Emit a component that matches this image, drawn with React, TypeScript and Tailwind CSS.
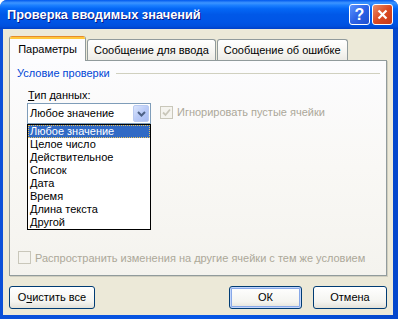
import { useState } from 'react';

const types = [
    "Любое значение",
    "Целое число",
    "Действительное",
    "Список",
    "Дата",
    "Время",
    "Длина текста",
    "Другой",
];

function Check({ checked }: { checked?: boolean }) {
    return (
        <span className="w-[13px] h-[13px] shrink-0 border border-[#C9C7BA] bg-[#F5F4EF] flex items-center justify-center">
            {checked && (
                <svg width="9" height="9" viewBox="0 0 9 9">
                    <path d="M1 4.5 L3.5 7 L8 1.5" fill="none" stroke="#C9C7BA" strokeWidth="1.8" />
                </svg>
            )}
        </span>
    );
}

function Tab({ label, active }: { label: string; active?: boolean }) {
    if (active) {
        return (
            <div className="relative z-10 -mb-px h-[25px] w-[77px] flex flex-col rounded-t-[3px] border-x border-[#919B9C] bg-[#FCFCFE] overflow-hidden">
                <div className="h-[1px] bg-[#E68B2C]" />
                <div className="h-[2px] bg-[#FFC73C]" />
                <div className="flex-1 flex items-center justify-center pb-[2px]">{label}</div>
            </div>
        );
    }
    return (
        <div className="h-[21px] px-[6px] flex items-center rounded-t-[3px] border border-b-0 border-[#919B9C] bg-[linear-gradient(to_bottom,#FFFFFF,#F6F5F1_60%,#ECEBE6)] whitespace-nowrap">
            {label}
        </div>
    );
}

export default function App() {
    const [selected] = useState(0);

    return (
        <div className="w-[398px] h-[319px] flex flex-col rounded-t-[7px] overflow-hidden bg-[linear-gradient(to_right,#0A4FD8,#0657E6_50%,#0447CC)] font-['Liberation_Sans',Arial,sans-serif] text-[11px] text-black">
            <div className="h-[29px] shrink-0 flex items-center pl-[7px] pr-[5px] bg-[linear-gradient(to_bottom,#0058EE,#3D95FF_10%,#1C80FF_18%,#0467F6_30%,#0058E8_50%,#0055E6_75%,#0050DE_90%,#0040C8)]">
                <span className="text-white font-bold text-[12.8px] [text-shadow:1px_1px_0_#0A1883]">
                    Проверка вводимых значений
                </span>
                <div className="ml-auto flex gap-[2px]">
                    <div className="w-[21px] h-[21px] rounded-[3px] border border-white bg-[linear-gradient(135deg,#5B93FF,#2D63E6_50%,#1E4FD0)] flex items-center justify-center text-white font-bold text-[16px] leading-none">
                        ?
                    </div>
                    <div className="w-[21px] h-[21px] rounded-[3px] border border-white bg-[linear-gradient(135deg,#E98E6A,#DB4A22_50%,#C7391A)] flex items-center justify-center">
                        <svg width="11" height="11" viewBox="0 0 11 11">
                            <path d="M1.5 1.5 L9.5 9.5 M9.5 1.5 L1.5 9.5" stroke="white" strokeWidth="2.2" />
                        </svg>
                    </div>
                </div>
            </div>

            <div className="flex-1 ml-[3px] mr-[5px] mb-[4px] bg-[#ECE9D8] flex flex-col px-[6px] pt-[7px]">
                <div className="h-[24px] flex items-end gap-[1px]">
                    <Tab label="Параметры" active />
                    <Tab label="Сообщение для ввода" />
                    <Tab label="Сообщение об ошибке" />
                </div>

                <div className="h-[216px] border border-[#919B9C] shadow-[1px_1px_0_#D0CEBF] bg-[linear-gradient(to_bottom,#FCFCFE,#F9F8F5_50%,#F4F3EE)] flex flex-col">
                    <div className="mt-[6px] pl-[7px] pr-[6px] h-[13px] flex items-center">
                        <span className="text-[#0046D5] whitespace-nowrap">Условие проверки</span>
                        <div className="flex-1 ml-[6px] h-px bg-[#D0D0BF] mb-[1px]" />
                    </div>

                    <div className="mt-[9px] pl-[18px] h-[13px] leading-[13px]">
                        <span className="underline">Т</span>ип данных:
                    </div>

                    <div className="mt-[1px] pl-[17px] flex items-start">
                        <div className="relative w-[124px] h-[21px] border border-[#7F9DB9] bg-white flex items-center">
                            <span className="pl-[2px] flex-1">{types[selected]}</span>
                            <div className="mr-px w-[16px] h-[17px] rounded-[2px] border border-[#B9CAF1] bg-[linear-gradient(135deg,#DCE6FD,#BACBF7_50%,#A8BCF3)] flex items-center justify-center">
                                <svg width="9" height="6" viewBox="0 0 9 6">
                                    <path d="M1 1 L4.5 4.5 L8 1" fill="none" stroke="#4D6185" strokeWidth="2" />
                                </svg>
                            </div>
                            <div className="absolute left-[-1px] top-[20px] w-[124px] border border-black bg-white z-20">
                                {types.map((t, i) => (
                                    <div
                                        key={t}
                                        className={
                                            i === selected
                                                ? "h-[13px] leading-[11px] pl-[1px] bg-[#316AC5] text-white border border-dotted border-[#E8C25D]"
                                                : "h-[13px] leading-[13px] pl-[2px]"
                                        }
                                    >
                                        {t}
                                    </div>
                                ))}
                            </div>
                        </div>
                        <div className="ml-[9px] mt-[1px] flex items-center gap-[4px] text-[#ACA899]">
                            <Check checked />
                            <span>Игнорировать пустые ячейки</span>
                        </div>
                    </div>

                    <div className="mt-auto mb-[9px] pl-[8px] flex items-center gap-[4px] text-[#ACA899]">
                        <Check />
                        <span>Распространить изменения на другие ячейки с тем же условием</span>
                    </div>
                </div>

                <div className="mt-[10px] h-[23px] flex">
                    <button className="w-[86px] h-full rounded-[3px] border border-[#003C74] bg-[linear-gradient(to_bottom,#FFFFFF,#F4F4F0_70%,#E3E1D8)]">
                        О<span className="underline">ч</span>истить все
                    </button>
                    <button className="ml-auto w-[73px] h-full rounded-[3px] border border-[#003C74] bg-[linear-gradient(to_bottom,#FFFFFF,#F4F4F0_70%,#E3E1D8)] shadow-[inset_0_0_0_1px_#C2D5FC,inset_0_0_0_2px_#87A8E8]">
                        ОК
                    </button>
                    <button className="ml-[11px] w-[74px] h-full rounded-[3px] border border-[#003C74] bg-[linear-gradient(to_bottom,#FFFFFF,#F4F4F0_70%,#E3E1D8)]">
                        Отмена
                    </button>
                </div>
            </div>
        </div>
    );
}
